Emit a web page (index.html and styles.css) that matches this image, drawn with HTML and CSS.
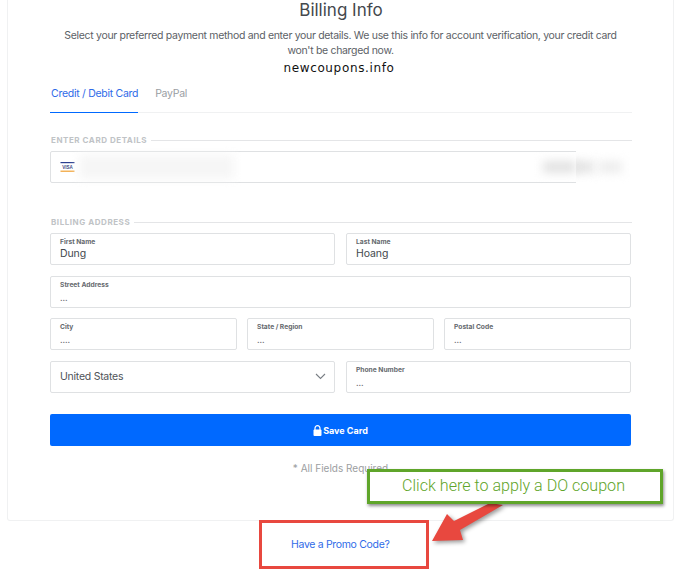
FILE: index.html
```html
<!DOCTYPE html>
<html lang="en">
<head>
<meta charset="utf-8">
<title>Billing Info</title>
<link rel="stylesheet" href="styles.css">
</head>
<body>
<main class="card">
  <h1 class="title">Billing Info</h1>
  <p class="intro">Select your preferred payment method and enter your details. We use this info for account verification, your credit card won't be charged now.</p>
  <p class="watermark">newcoupons.info</p>
  <nav class="tabs">
    <a class="tab tab-active">Credit / Debit Card</a>
    <a class="tab">PayPal</a>
  </nav>
  <div class="legend legend-card"><span>ENTER CARD DETAILS</span></div>
  <div class="card-input">
    <svg class="visa" width="15" height="10" viewBox="0 0 15 10" aria-hidden="true">
      <rect x="0.5" y="0" width="14" height="1.2" fill="#2a3f8f"/>
      <rect x="0.5" y="8.6" width="14" height="1.2" fill="#f0a030"/>
      <text class="visa-text" x="7.5" y="6.8" text-anchor="middle">VISA</text>
    </svg>
    <span class="blur blur-number"></span>
    <div class="mask">
      <span class="blur blur-left"></span>
      <span class="blur blur-right"></span>
    </div>
    <span class="blur blur-expiry"></span>
  </div>
  <div class="legend legend-address"><span>BILLING ADDRESS</span></div>
  <div class="fields">
    <div class="row row-2">
      <div class="field"><label>First Name</label><div class="value">Dung</div></div>
      <div class="field"><label>Last Name</label><div class="value">Hoang</div></div>
    </div>
    <div class="row row-1">
      <div class="field"><label>Street Address</label><div class="value value-small">...</div></div>
    </div>
    <div class="row row-3">
      <div class="field"><label>City</label><div class="value value-small">....</div></div>
      <div class="field"><label>State / Region</label><div class="value value-small">...</div></div>
      <div class="field"><label>Postal Code</label><div class="value value-small">...</div></div>
    </div>
    <div class="row row-2">
      <div class="field field-select">
        <span class="select-text">United States</span>
        <svg width="11" height="7" viewBox="0 0 11 7" aria-hidden="true"><path d="M1 1l4.5 4.5L10 1" fill="none" stroke="#7a7f85" stroke-width="1.1"/></svg>
      </div>
      <div class="field"><label>Phone Number</label><div class="value value-small">...</div></div>
    </div>
  </div>
  <button class="save" type="button">
    <svg width="9" height="11" viewBox="0 0 9 11" aria-hidden="true"><path d="M2 5V3.2a2.5 2.5 0 0 1 5 0V5" fill="none" stroke="#fff" stroke-width="1.2"/><rect x="0.5" y="4.5" width="8" height="6.5" rx="1" fill="#fff"/></svg>
    <span>Save Card</span>
  </button>
  <p class="required">* All Fields Required</p>
</main>
<footer class="promo"><a>Have a Promo Code?</a></footer>

<svg class="arrow" width="80" height="50" viewBox="0 0 80 50" aria-hidden="true">
  <polygon points="2,41 17,14 24,21 60,3 73,5 30,30 33,40" fill="#e8483f"/>
</svg>
<div class="callout">Click here to apply a DO coupon</div>
<div class="promo-frame"></div>
</body>
</html>
```
FILE: styles.css
```css
* { box-sizing: border-box; }
html, body { margin: 0; padding: 0; }
body {
  width: 689px;
  height: 574px;
  overflow: hidden;
  position: relative;
  background: #fff;
  font-family: Inter, "Liberation Sans", sans-serif;
  color: #555b61;
}
.card {
  margin-left: 7px;
  width: 667px;
  height: 521px;
  padding: 0 42px;
  border: 1px solid #f0f1f2;
  border-top: 0;
  border-radius: 0 0 3px 3px;
}
.title {
  margin: 0;
  height: 19px;
  padding: 1px 0 0 1px;
  font-size: 17px;
  line-height: 18px;
  font-weight: 400;
  color: #44484d;
  text-align: center;
}
.intro {
  margin: 9px 0 0;
  padding: 0 10px;
  font-size: 10.5px;
  line-height: 15px;
  letter-spacing: -0.32px;
  text-align: center;
  color: #5c6166;
}
.watermark {
  margin: 2px 0 0;
  padding-right: 3px;
  height: 17px;
  font-family: "DejaVu Sans", sans-serif;
  font-size: 12px;
  line-height: 17px;
  letter-spacing: 0.65px;
  color: #111;
  text-align: center;
}
.tabs {
  display: flex;
  gap: 17px;
  height: 36px;
  margin-right: -1px;
  border-bottom: 1px solid #f0f1f2;
  padding-top: 8px;
}
.tab {
  height: 28px;
  font-size: 10.5px;
  line-height: 17px;
  letter-spacing: -0.28px;
  color: #9a9ea3;
}
.tab-active {
  padding-left: 1px;
  color: #2f6be8;
  border-bottom: 1px solid #0069ff;
  margin-bottom: -1px;
}
.legend {
  display: flex;
  align-items: center;
  gap: 4px;
  height: 12px;
  margin-right: -1px;
  padding-left: 1px;
  font-size: 8px;
  font-weight: 700;
  letter-spacing: 0.55px;
  color: #c0c3c6;
}
.legend::after {
  content: "";
  flex: 1;
  border-top: 1px solid #e4e5e7;
}
.legend-card { margin-top: 21px; }
.legend-address { margin-top: 33px; }
.card-input {
  position: relative;
  display: flex;
  align-items: center;
  height: 32px;
  margin-top: 5px;
  padding-left: 9px;
  border: 1px solid #dfe1e3;
  border-radius: 2px;
}
.visa-text {
  font-family: "Liberation Sans", sans-serif;
  font-size: 4.6px;
  font-weight: 700;
  fill: #3c4a85;
}
.blur {
  position: absolute;
  filter: blur(5px);
}
.blur-number {
  left: 28px;
  top: 3px;
  width: 155px;
  height: 24px;
  background: #f6f6f6;
}
.blur-expiry {
  left: 492px;
  top: 9px;
  width: 33px;
  height: 12px;
  background: #e2e2e2;
}
.mask {
  position: absolute;
  left: 525px;
  top: -2px;
  width: 66px;
  height: 35px;
  overflow: hidden;
  background: #fff;
}
.blur-left {
  left: -8px;
  top: 11px;
  width: 26px;
  height: 12px;
  background: #e4e4e4;
}
.blur-right {
  left: 22px;
  top: 11px;
  width: 24px;
  height: 12px;
  background: #ededed;
}
.fields {
  display: flex;
  flex-direction: column;
  margin-top: 5px;
}
.row { display: grid; gap: 11px; margin-bottom: 11px; }
.row:nth-child(2) { margin-bottom: 10px; }
.row-1 { grid-template-columns: 1fr; }
.row-2 { grid-template-columns: 285px 285px; }
.row-3 { grid-template-columns: 187px 187px 187px; gap: 10px; }
.field {
  height: 32px;
  padding: 4px 9px 0;
  border: 1px solid #dfe1e3;
  border-radius: 2px;
  overflow: hidden;
}
.field label {
  display: block;
  height: 9px;
  font-size: 6.7px;
  line-height: 9px;
  font-weight: 700;
  color: #65696e;
}
.value {
  margin-top: -1px;
  font-size: 10.5px;
  line-height: 15px;
  letter-spacing: -0.1px;
  color: #44484d;
}
.value-small {
  margin-top: 0;
  font-size: 9px;
  color: #707479;
}
.field-select {
  display: flex;
  align-items: center;
  justify-content: space-between;
  padding: 0 8px 2px 9px;
}
.select-text {
  font-size: 10.5px;
  letter-spacing: -0.25px;
  color: #4e5358;
}
.save {
  display: flex;
  align-items: center;
  justify-content: center;
  gap: 1px;
  width: 581px;
  height: 32px;
  margin-top: 10px;
  border: 0;
  border-radius: 2px;
  background: #0069ff;
  color: #fff;
  font-family: Inter, "Liberation Sans", sans-serif;
  font-size: 9px;
  font-weight: 700;
}
.required {
  margin: 15px 0 0;
  font-size: 10px;
  line-height: 14px;
  text-align: center;
  color: #9b9ea1;
}
.promo {
  margin-top: 17px;
  padding-left: 291px;
  font-size: 10.5px;
  line-height: 14px;
  letter-spacing: -0.32px;
  color: #2f6be8;
}
.callout {
  position: absolute;
  left: 367px;
  top: 469px;
  width: 296px;
  height: 35px;
  padding-right: 3px;
  border: 3px solid #5fa52a;
  background: #fff;
  box-shadow: 1px 2px 3px rgba(0,0,0,0.45);
  font-family: Roboto, "Liberation Sans", sans-serif;
  font-weight: 300;
  font-size: 16.1px;
  line-height: 28px;
  text-align: center;
  color: #5fa52a;
}
.promo-frame {
  position: absolute;
  left: 259px;
  top: 520px;
  width: 170px;
  height: 49px;
  border: 3px solid #e8483f;
}
.arrow {
  position: absolute;
  left: 430px;
  top: 500px;
  overflow: visible;
  filter: drop-shadow(2px 2px 2px rgba(0,0,0,0.4));
}
```
